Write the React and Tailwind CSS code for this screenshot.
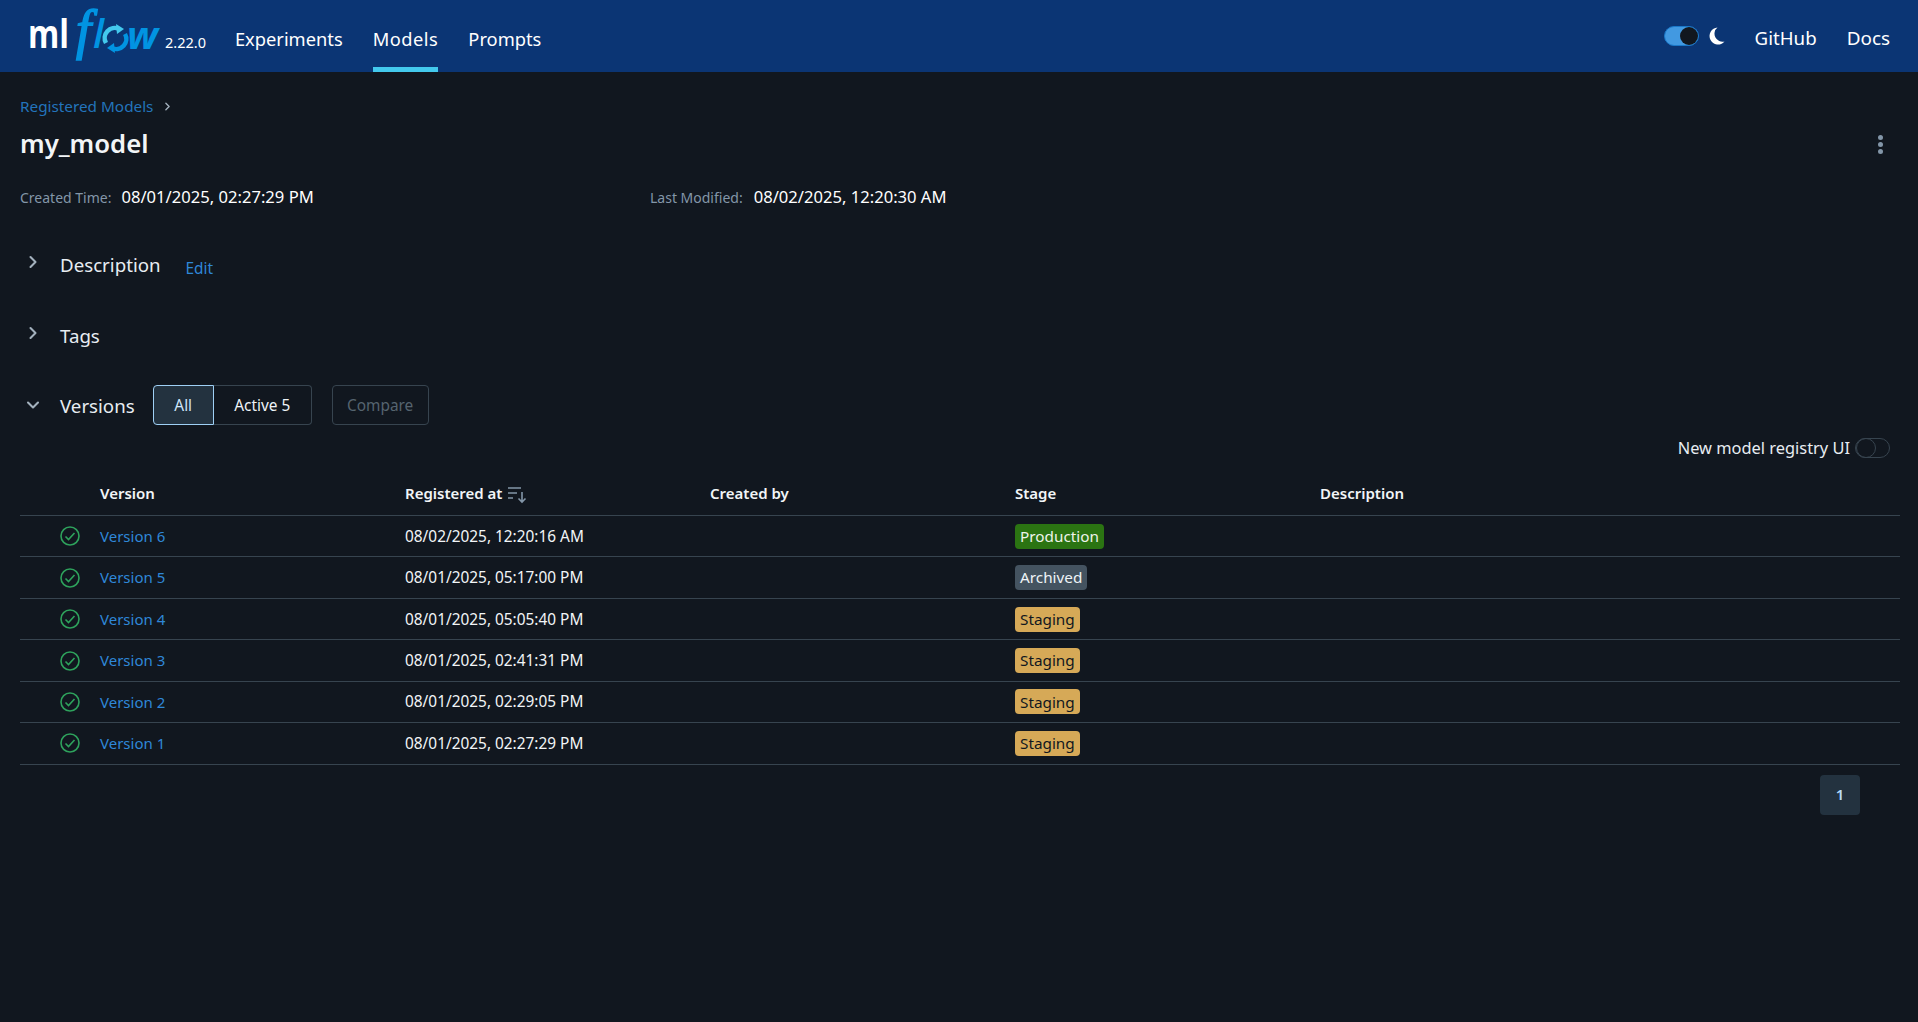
import { ChevronRight, ChevronDown } from 'lucide-react';

const versions = [
  { name: 'Version 6', date: '08/02/2025, 12:20:16 AM', stage: 'Production' },
  { name: 'Version 5', date: '08/01/2025, 05:17:00 PM', stage: 'Archived' },
  { name: 'Version 4', date: '08/01/2025, 05:05:40 PM', stage: 'Staging' },
  { name: 'Version 3', date: '08/01/2025, 02:41:31 PM', stage: 'Staging' },
  { name: 'Version 2', date: '08/01/2025, 02:29:05 PM', stage: 'Staging' },
  { name: 'Version 1', date: '08/01/2025, 02:27:29 PM', stage: 'Staging' },
];

const stageColors = {
  Production: 'bg-[#2b7412] text-[#eef3ea]',
  Archived: 'bg-[#445360] text-[#eef3f7]',
  Staging: 'bg-[#d6a957] text-[#11171f]',
};

// svg x = page x - 27, svg y = page y
const Logo = () => (
  <svg width="137" height="72" viewBox="0 0 137 72" className="shrink-0">
    <text x="1" y="48" fontFamily="'Open Sans', sans-serif" fontWeight="700" fontSize="40" fill="#ffffff" textLength="41" lengthAdjust="spacingAndGlyphs">ml</text>
    <text x="49" y="48" fontFamily="'Liberation Serif', serif" fontStyle="italic" fontSize="54" fill="#0194e2" stroke="#0194e2" strokeWidth="1.6">f</text>
    <text x="66" y="48" fontFamily="'Open Sans', sans-serif" fontStyle="italic" fontWeight="600" fontSize="40" fill="#0194e2">l</text>
    <path d="M79 43a10 10 0 0 1 13-14" fill="none" stroke="#43c9ed" strokeWidth="4.500" />
    <path d="M89 24l8 5-7 5z" fill="#43c9ed" />
    <path d="M98 34a10 10 0 0 1-13 14" fill="none" stroke="#0194e2" strokeWidth="4.500" />
    <path d="M88 53l-8-5 7-5z" fill="#0194e2" />
    <text x="100" y="49" fontFamily="'Open Sans', sans-serif" fontStyle="italic" fontWeight="700" fontSize="38" fill="#0194e2" textLength="31" lengthAdjust="spacingAndGlyphs">w</text>
  </svg>
);

const NavItem = ({ label, active }) => (
  <a className={`h-full flex items-center text-[18.300px] border-b-[5px] pt-[11px] ${active ? 'border-[#43c9ed] tracking-[0.5px]' : 'border-transparent'}`}>
    {label}
  </a>
);

const SectionHead = ({ title, open, children }) => (
  <div className="flex items-center">
    {open ? (
      <ChevronDown size={20} strokeWidth={2.5} className="text-[#a3b1bd] ml-[3px] mr-[17px]" />
    ) : (
      <ChevronRight size={20} strokeWidth={2.5} className="text-[#a3b1bd] ml-[3px] mr-[17px] -mt-[4px]" />
    )}
    <span className="text-[18.700px] text-[#e8edf2] pt-[2px]">{title}</span>
    {children}
  </div>
);

const gridCols = 'grid grid-cols-[80px_305px_305px_305px_305px_1fr] items-center';

const App = () => {
  return (
    <div className="min-h-[1022px] bg-[#11171f] text-[#e8edf2] font-['Noto_Sans','Open_Sans',sans-serif] flex flex-col">
      <header className="h-[72px] bg-[#0b3574] flex items-center pl-[27px] pr-[28px] text-white">
        <Logo />
        <span className="text-[14.500px] ml-[1px] mt-[14px]">2.22.0</span>
        <nav className="flex h-full gap-[30px] ml-[29px]">
          <NavItem label="Experiments" />
          <NavItem label="Models" active />
          <NavItem label="Prompts" />
        </nav>
        <div className="ml-auto flex items-center pt-[5px]">
          <div className="w-[35px] h-[20px] rounded-full bg-[#4299e1] border border-[#1a78c9] relative -mt-[5px]">
            <div className="absolute right-0 top-0 w-[18px] h-[18px] rounded-full bg-[#11171f]" />
          </div>
          <svg width="16" height="18" viewBox="0 0 16 18" className="ml-[10px] -mt-[4px]">
            <path d="M8.500 0.500A8.500 8.500 0 1 0 15.500 14.500A8 8 0 0 1 8.500 0.500Z" fill="#ffffff" />
          </svg>
          <a className="text-[18.700px] ml-[30px]">GitHub</a>
          <a className="text-[18.900px] ml-[30px]">Docs</a>
        </div>
      </header>

      <main className="pl-[20px] pr-[18px] pt-[24px]">
        <div className="flex items-center text-[15.300px] h-[20px]">
          <a className="text-[#2374bb]">Registered Models</a>
          <ChevronRight size={13} strokeWidth={2.5} className="text-[#a3b1bd] ml-[8px]" />
        </div>
        <div className="flex items-center justify-between h-[36px] mt-[10px]">
          <h1 className="text-[25.700px] font-semibold text-[#f2f5f7]">my_model</h1>
          <div className="flex flex-col gap-[2px] mr-[17px]">
            <span className="w-[5px] h-[5px] rounded-full bg-[#8396a8]" />
            <span className="w-[5px] h-[5px] rounded-full bg-[#8396a8]" />
            <span className="w-[5px] h-[5px] rounded-full bg-[#8396a8]" />
          </div>
        </div>
        <div className="flex items-center h-[24px] mt-[23px]">
          <div className="w-[630px] flex items-center">
            <span className="text-[14px] text-[#8396a8]">Created Time:</span>
            <span className="text-[16.600px] ml-[10px] text-white">08/01/2025, 02:27:29 PM</span>
          </div>
          <span className="text-[14px] text-[#8396a8]">Last Modified:</span>
          <span className="text-[16.600px] ml-[11px] text-white">08/02/2025, 12:20:30 AM</span>
        </div>

        <div className="mt-[39px] h-[30px]">
          <SectionHead title="Description">
            <a className="text-[15.400px] text-[#2f87d8] ml-[25px] mt-[9px]">Edit</a>
          </SectionHead>
        </div>
        <div className="mt-[42px] h-[30px]">
          <SectionHead title="Tags" />
        </div>
        <div className="mt-[35px] h-[40px]">
          <SectionHead title="Versions" open>
            <div className="flex ml-[18px] text-[15.400px]">
              <button className="h-[40px] w-[61px] pt-[2px] bg-[#23323f] border border-[#9fd0f5] rounded-l-[4px] text-[#cfe6fa]">All</button>
              <button className="h-[40px] w-[98px] pt-[2px] border border-l-0 border-[#37444f] rounded-r-[4px] text-[#eef3f7]">Active 5</button>
            </div>
            <button className="h-[40px] w-[97px] pt-[2px] ml-[20px] border border-[#37444f] rounded-[4px] text-[15.400px] text-[#56646f]">Compare</button>
          </SectionHead>
        </div>

        <div className="flex items-center justify-end gap-[5px] h-[24px] mt-[11px] pr-[10px]">
          <span className="text-[16.400px]">New model registry UI</span>
          <div className="w-[35px] h-[20px] rounded-full border border-[#37444f] relative">
            <div className="absolute left-0 -top-px w-[20px] h-[20px] rounded-full border border-[#37444f]" />
          </div>
        </div>

        <div className="mt-[12px]">
          <div className={`${gridCols} h-[44px] border-b border-[#37444f] text-[15px] font-semibold text-[#f2f5f7]`}>
            <div />
            <div>Version</div>
            <div className="flex items-center gap-[5px]">
              Registered at
              <svg width="20" height="20" viewBox="0 0 20 20" fill="none" stroke="#8396a8" strokeWidth="1.6">
                <path d="M1 4h13M1 9h9M1 14h5M15 8v10M11.500 14.500l3.500 3.500 3.500-3.500" />
              </svg>
            </div>
            <div>Created by</div>
            <div>Stage</div>
            <div>Description</div>
          </div>
          {versions.map((v) => (
            <div key={v.name} className={`${gridCols} h-[41.45px] border-b border-[#37444f] text-[15px]`}>
              <div className="pl-[40px]">
                <svg width="20" height="20" viewBox="0 0 20 20" fill="none" stroke="#2ea25c" strokeWidth="1.6">
                  <circle cx="10" cy="10" r="9" />
                  <path d="M5.500 10.500l3 3 6-6.500" />
                </svg>
              </div>
              <a className="text-[#2f87d8]">{v.name}</a>
              <div className="text-[#f2f5f7] text-[15.400px]">{v.date}</div>
              <div />
              <div>
                <span className={`inline-flex items-center h-[25px] px-[5px] rounded-[4px] text-[15.300px] ${stageColors[v.stage]}`}>{v.stage}</span>
              </div>
              <div />
            </div>
          ))}
        </div>

        <div className="flex justify-end mt-[10px] pr-[40px]">
          <button className="w-[40px] h-[40px] rounded-[4px] bg-[#23323f] text-[#b8dcf7] text-[15px] font-semibold">1</button>
        </div>
      </main>
    </div>
  );
};

export default App;
